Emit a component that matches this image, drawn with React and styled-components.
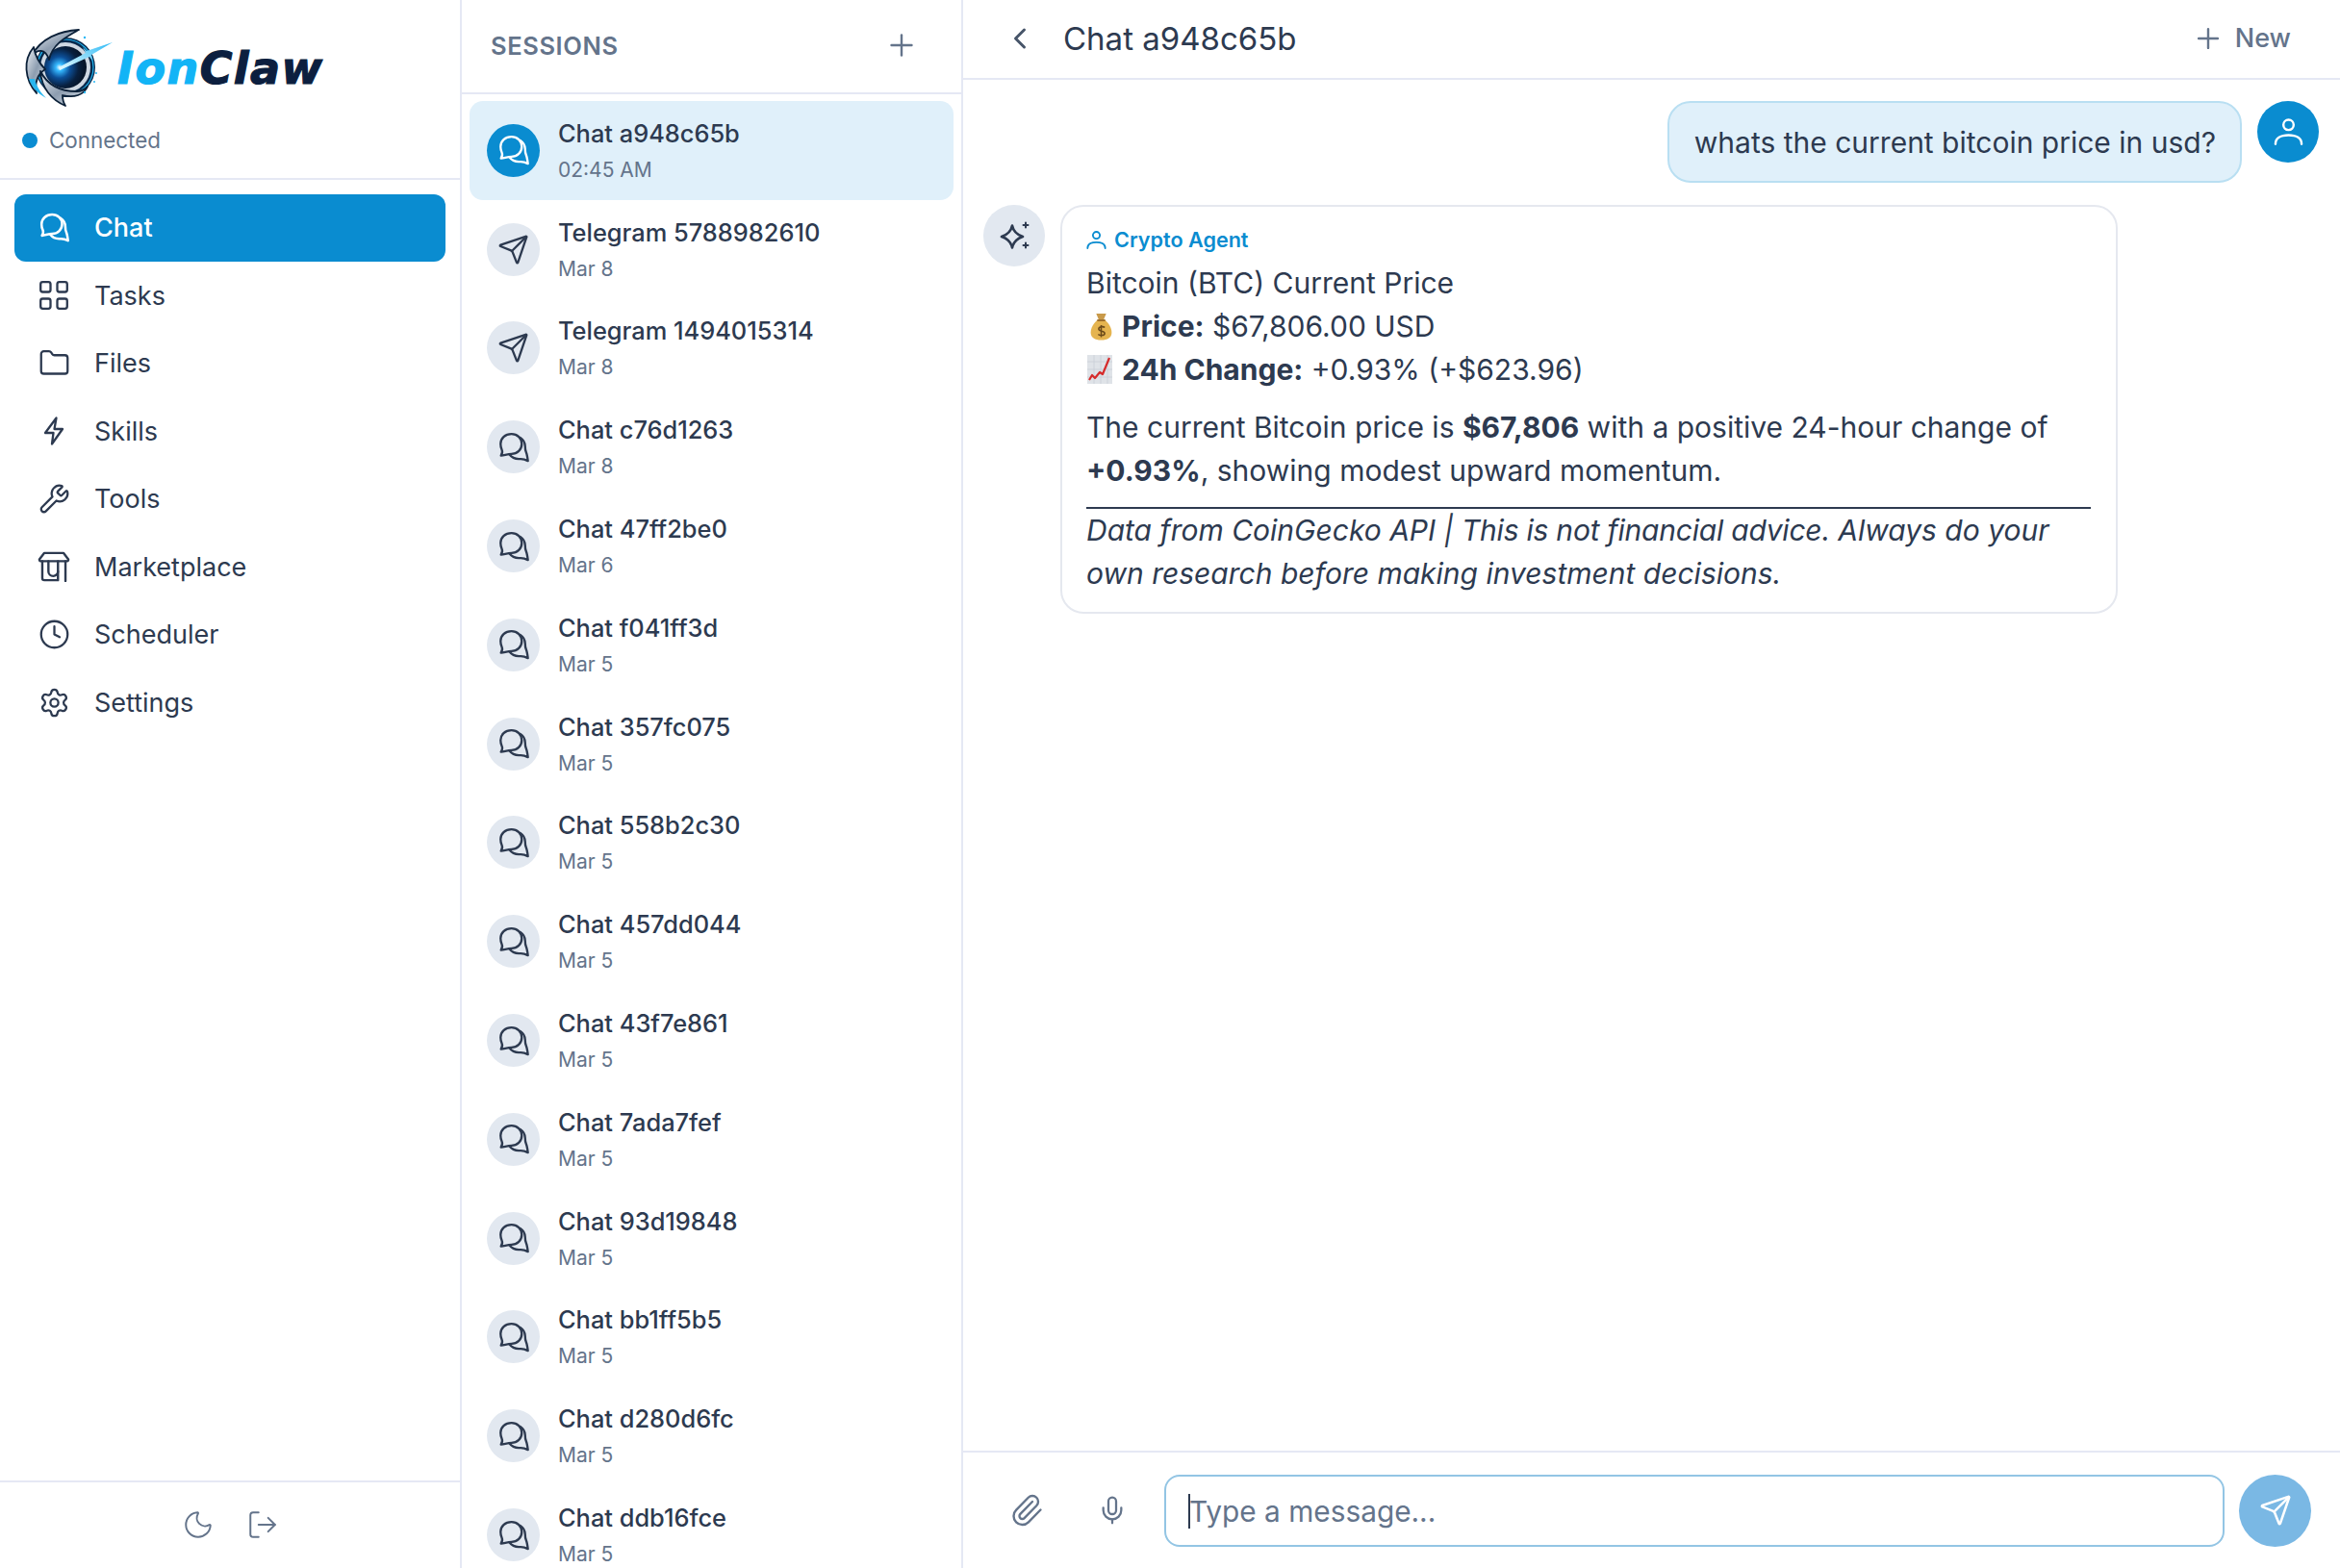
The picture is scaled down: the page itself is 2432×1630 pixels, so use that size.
import React from "react";
import styled, { createGlobalStyle } from "styled-components";
import {
  Folder, Wrench, Clock, Settings, Plus, ChevronLeft, Send,
  Paperclip, Mic, Moon, LogOut,
} from "lucide-react";

const Global = createGlobalStyle`
  html, body { margin: 0; padding: 0; height: 100%; overflow: hidden; background: #fff; }
  body { font-family: Inter, "Noto Sans", "Liberation Sans", sans-serif; color: #2d3a50; }
  #root { height: 100%; }
  * { box-sizing: border-box; }
`;

const Shell = styled.div`
  display: grid;
  grid-template-columns: 480px 521px 1fr;
  height: 1630px;
  background: #fff;
`;

/* ---------- sidebar ---------- */
const Sidebar = styled.aside`
  display: flex;
  flex-direction: column;
  border-right: 2px solid #e5e8f4;
  min-height: 0;
`;
const Brand = styled.div`
  height: 187px;
  flex: none;
  padding: 28px 0 0 25px;
  border-bottom: 2px solid #e5e8f4;
`;
const LogoRow = styled.div`
  display: flex;
  align-items: center;
  height: 84px;
  gap: 4px;
`;
const Wordmark = styled.div`
  font-family: "DejaVu Sans", sans-serif;
  font-weight: 700;
  font-style: italic;
  font-size: 46px;
  line-height: 1;
  letter-spacing: 1.4px;
  color: #0c1f3f;
  margin-top: 2px;
  -webkit-text-stroke: 1.2px currentColor;
`;
const WordAccent = styled.span`
  color: #12b4f6;
`;
const Status = styled.div`
  display: flex;
  align-items: center;
  gap: 12px;
  margin: 20px 0 0 -2px;
  font-size: 22.4px;
  line-height: 28px;
  color: #64748b;
`;
const Dot = styled.span`
  width: 16px;
  height: 16px;
  border-radius: 50%;
  background: #0a8cd2;
`;
const Nav = styled.nav`
  flex: 1;
  display: flex;
  flex-direction: column;
  padding: 14.5px 15px 0;
`;
const NavItem = styled.a`
  display: flex;
  align-items: center;
  gap: 24px;
  height: 70.5px;
  flex: none;
  padding-left: 23px;
  border-radius: 12px;
  font-size: 27px;
  font-weight: ${(p) => (p.$active ? 500 : 400)};
  color: ${(p) => (p.$active ? "#fff" : "#2d3a50")};
  background: ${(p) => (p.$active ? "#0a8cd0" : "transparent")};
`;
const NavGlyph = styled.span`
  width: 36px;
  height: 36px;
  flex: none;
  display: flex;
  align-items: center;
  justify-content: center;
`;
const Foot = styled.div`
  height: 91px;
  flex: none;
  border-top: 2px solid #e5e8f4;
  display: flex;
  align-items: center;
  justify-content: center;
  gap: 33px;
  padding-bottom: 2px;
  color: #64748b;
`;

/* ---------- sessions ---------- */
const Sessions = styled.section`
  display: flex;
  flex-direction: column;
  border-right: 2px solid #e5e8f4;
  min-height: 0;
  overflow: hidden;
`;
const SessionsHead = styled.header`
  height: 98px;
  flex: none;
  display: flex;
  align-items: center;
  justify-content: space-between;
  padding: 0 44px 2px 30px;
  border-bottom: 2px solid #e5e8f4;
`;
const SessionsTitle = styled.h2`
  margin: 0;
  font-size: 25.5px;
  font-weight: 600;
  letter-spacing: 0.6px;
  color: #64748b;
`;
const PlusButton = styled.span`
  display: flex;
  color: #64748b;
`;
const SessionList = styled.div`
  display: flex;
  flex-direction: column;
  padding: 7px 8px 0;
`;
const SessionRow = styled.div`
  display: flex;
  align-items: center;
  gap: 19px;
  height: 102.8px;
  flex: none;
  padding: 0 0 0 18px;
  border-radius: 14px;
  background: ${(p) => (p.$active ? "#e0f0fa" : "transparent")};
`;
const SessionAvatar = styled.div`
  width: 55px;
  height: 55px;
  flex: none;
  border-radius: 50%;
  display: flex;
  align-items: center;
  justify-content: center;
  background: ${(p) => (p.$active ? "#0a8cd0" : "#e2e8f0")};
  color: ${(p) => (p.$active ? "#fff" : "#2d3a50")};
`;
const SessionText = styled.div`
  display: flex;
  flex-direction: column;
  gap: 8px;
`;
const SessionName = styled.div`
  font-size: 25.4px;
  line-height: 32px;
  font-weight: 500;
  color: #2d3a50;
`;
const SessionDate = styled.div`
  font-size: 21px;
  line-height: 27px;
  color: #64748b;
`;

/* ---------- chat ---------- */
const Main = styled.main`
  display: flex;
  flex-direction: column;
  min-width: 0;
  min-height: 0;
`;
const ChatHead = styled.header`
  height: 83px;
  flex: none;
  display: flex;
  align-items: center;
  padding: 0 51px 2px 41px;
  border-bottom: 2px solid #e5e8f4;
`;
const BackIcon = styled.span`
  display: flex;
  color: #475569;
  width: 63px;
`;
const ChatTitle = styled.h1`
  flex: 1;
  margin: 0;
  font-size: 33px;
  font-weight: 400;
  color: #2d3a50;
`;
const NewButton = styled.div`
  display: flex;
  align-items: center;
  gap: 11px;
  font-size: 27px;
  font-weight: 500;
  color: #64748b;
`;
const Messages = styled.div`
  flex: 1;
  min-height: 0;
  display: flex;
  flex-direction: column;
  gap: 23px;
  padding: 22px 22px 0 21px;
`;
const UserRow = styled.div`
  display: flex;
  justify-content: flex-end;
  align-items: flex-start;
  gap: 16px;
`;
const UserBubble = styled.div`
  padding: 20px 25px 20px 26px;
  height: 85px;
  border: 2px solid #b9dff2;
  border-radius: 24px;
  background: #e0f0fa;
  font-size: 30px;
  line-height: 42px;
  color: #2d3a50;
`;
const RoundAvatar = styled.div`
  width: 64px;
  height: 64px;
  flex: none;
  border-radius: 50%;
  display: flex;
  align-items: center;
  justify-content: center;
  background: ${(p) => (p.$user ? "#0a8cd0" : "#e2e8f0")};
  color: ${(p) => (p.$user ? "#fff" : "#2d3a50")};
`;
const AgentRow = styled.div`
  display: flex;
  align-items: flex-start;
  gap: 16px;
`;
const AgentBubble = styled.div`
  width: 1099px;
  height: 425px;
  padding: 18px 26px 0 25px;
  border: 2px solid #e5e8ef;
  border-radius: 24px;
  font-size: 30px;
  line-height: 45px;
  color: #2d3a50;
`;
const AgentName = styled.div`
  display: flex;
  align-items: center;
  gap: 8px;
  height: 33px;
  margin-bottom: 6px;
  font-size: 21.6px;
  font-weight: 600;
  color: #0a8cd0;
`;
const Paragraph = styled.p`
  margin: 0 0 15px;
`;
const Divider = styled.hr`
  margin: 0;
  height: 2px;
  border: 0;
  background: #2d3a50;
`;
const Note = styled.p`
  margin: 0;
  font-style: italic;
`;
const NoteTight = styled.span`
  letter-spacing: -0.22px;
`;
const Emoji = styled.svg`
  display: inline-block;
  vertical-align: -4px;
  margin-left: ${(p) => p.$lead}px;
  margin-right: 10px;
`;
const Composer = styled.footer`
  height: 122px;
  flex: none;
  display: flex;
  align-items: center;
  border-top: 2px solid #e5e8f4;
  padding: 0 30px 0 31px;
  gap: 20px;
`;
const ToolButton = styled.span`
  width: 69px;
  display: flex;
  justify-content: center;
  color: #64748b;
`;
const InputBox = styled.div`
  flex: 1;
  height: 75px;
  display: flex;
  align-items: center;
  padding: 2px 0 0 23px;
  border: 2.5px solid #93c5e4;
  border-radius: 16px;
  font-size: 29.8px;
  color: #64748b;
`;
const Caret = styled.span`
  width: 2px;
  height: 36px;
  margin-right: -1px;
  background: #2d3a50;
`;
const SendButton = styled.span`
  width: 75px;
  height: 75px;
  flex: none;
  margin-left: -5px;
  border-radius: 50%;
  display: flex;
  align-items: center;
  justify-content: center;
  background: #7ab8e4;
  color: #fff;
`;

/* ---------- drawings ---------- */
const ChatsIcon = ({ size = 31, width = 1.95 }) => (
  <svg width={size} height={size} viewBox="0 0 24 24" fill="none" stroke="currentColor" strokeWidth={width} strokeLinecap="round" strokeLinejoin="round">
    <path d="M10.200 1.600c4.600 0 8 3.400 8 7.700 0 4.400-3.500 7.800-8 7.800-2.600 0-5 .9-8.200 1.400 1-1.600 1.400-3 .7-4.500-.7-1.400-1-2.800-1-4.600 0-4.400 3.500-7.800 8.500-7.800z" />
    <path d="M17 4.400c2.500 1.700 3.800 4 3.800 6.700 0 2 .2 3.500 .9 5 .4 1 .8 2.500 1.300 6.500-2.800-1.500-4.400-1.700-6.500-1.500-3.500.2-6-1-8-3.600" />
  </svg>
);

const GridIcon = () => (
  <svg width="30" height="30" viewBox="0 0 30 30" fill="none" stroke="currentColor" strokeWidth="2.300">
    <rect x="1.200" y="1.200" width="10.300" height="10.300" rx="2.200" />
    <rect x="18.500" y="1.200" width="10.300" height="10.300" rx="2.200" />
    <rect x="1.200" y="18.500" width="10.300" height="10.300" rx="2.200" />
    <rect x="18.500" y="18.500" width="10.300" height="10.300" rx="2.200" />
  </svg>
);

const BoltIcon = () => (
  <svg width="30" height="30" viewBox="0 0 30 30" fill="none" stroke="currentColor" strokeWidth="2.300" strokeLinejoin="round" strokeLinecap="round">
    <path d="M17.500 1.500L6 17h8.500l-1.500 11.500L24 13h-8.500z" />
  </svg>
);

const StoreIcon = () => (
  <svg width="34" height="34" viewBox="0 0 24 24" fill="none" stroke="currentColor" strokeWidth="1.700" strokeLinecap="round" strokeLinejoin="round">
    <path d="M5 2h14l3.500 4.500c.4.700 0 1.500-1 1.500H2.500c-1 0-1.400-.8-1-1.500z" />
    <path d="M3.500 8v12.500a1.500 1.500 0 0 0 1.500 1.500h10V8" />
    <path d="M20.500 8v14.500" />
    <path d="M8 8v7.500a3.500 3.500 0 0 0 7 0" />
  </svg>
);

const PersonIcon = ({ width = 31, stroke = 2.500 }) => (
  <svg width={width} viewBox="0 0 32 29" fill="none" stroke="currentColor" strokeWidth={stroke} strokeLinecap="round">
    <circle cx="16" cy="7" r="5.500" />
    <path d="M2 27.500c0-6 5.500-9.500 14-9.500s14 3.500 14 9.500" />
  </svg>
);

const SparkIcon = () => (
  <svg width="36" height="36" viewBox="0 0 36 36" fill="none" stroke="currentColor" strokeWidth="2.600" strokeLinejoin="round" strokeLinecap="round">
    <path d="M16 7.500c1 5 3.500 9 11 11.500-7.500 2.500-10 6.500-11 11.500-1-5-3.500-9-11-11.500 7.500-2.500 10-6.500 11-11.500z" />
    <path d="M30 4.500v5M27.500 7h5M30 25.500v5M27.500 28h5" strokeWidth="2" />
  </svg>
);

const MoneyBag = () => (
  <Emoji $lead={4} width="23" height="29" viewBox="0 0 22 28">
    <path d="M6 1h10l-2.500 6h-5z" fill="#c99a4a" />
    <path d="M7.500 7h7c4 3.500 7 8 7 13 0 5-4 7.500-10.500 7.500S.5 25 .5 20c0-5 3-9.500 7-13z" fill="#e5b44f" />
    <path d="M7 7h8v1.500H7z" fill="#8a5a1e" />
    <path d="M14.500 15c-1-1.300-6-1.300-6 1.300 0 3 6 1.500 6 4.400 0 2.600-5 2.600-6.500 1M11 12.500v12" fill="none" stroke="#6b4a1a" strokeWidth="1.500" />
  </Emoji>
);

const ChartEmoji = () => (
  <Emoji $lead={1} width="26" height="30" viewBox="0 0 26 30">
    <rect x="0" y="0" width="26" height="30" fill="#dfe3e8" />
    <path d="M0 7h26M0 15h26M0 23h26M7 0v30M14 0v30M21 0v30" stroke="#c9cfd7" strokeWidth="0.800" />
    <path d="M2 26l3-5 3 3 5-6 3 2 7-17" fill="none" stroke="#d62b2b" strokeWidth="2.200" strokeLinejoin="round" />
  </Emoji>
);

const Emblem = () => (
  <svg width="93" height="84" viewBox="25 28 93 84">
    <defs>
      <radialGradient id="core" cx="0.36" cy="0.5" r="0.6">
        <stop offset="0" stopColor="#e8fbff" />
        <stop offset="0.14" stopColor="#35b9ff" />
        <stop offset="0.42" stopColor="#0c4f98" />
        <stop offset="0.75" stopColor="#08203f" />
        <stop offset="1" stopColor="#061529" />
      </radialGradient>
      <linearGradient id="steel" x1="0" y1="0" x2="1" y2="1">
        <stop offset="0" stopColor="#eef2f6" />
        <stop offset="0.5" stopColor="#8d9db0" />
        <stop offset="1" stopColor="#dbe2ea" />
      </linearGradient>
      <linearGradient id="beam" x1="0" y1="1" x2="1" y2="0">
        <stop offset="0" stopColor="#e8fbff" />
        <stop offset="1" stopColor="#29b8f5" />
      </linearGradient>
    </defs>
    <circle cx="68" cy="70" r="31" fill="#0a2a4d" />
    <circle cx="68" cy="70" r="29" fill="none" stroke="#1fb3f0" strokeWidth="1.200" />
    <circle cx="68" cy="70" r="26" fill="#cfd8e2" />
    <circle cx="68" cy="70" r="22" fill="url(#core)" />
    <path d="M82 31C62 32 42 40 33 58c6-7 14-8 18 4 3-15 16-23 31-31z" fill="url(#steel)" stroke="#0b2038" strokeWidth="1.800" strokeLinejoin="round" />
    <path d="M35 49C24 62 25 82 38 97c-2-11 1-20 9-25-6-6-10-12-12-23z" fill="url(#steel)" stroke="#0b2038" strokeWidth="1.800" strokeLinejoin="round" />
    <path d="M68 110C54 104 43 92 42 74c6 12 18 21 38 21 5 0 8-2 11-5-4 9-14 12-26 9 0 4 1 8 3 11z" fill="url(#steel)" stroke="#0b2038" strokeWidth="1.800" strokeLinejoin="round" />
    <path d="M30 82c3 9 9 15 18 20-6-6-10-12-12-20z" fill="#28b6ef" />
    <path d="M117 44L90 53l-4-4 3 6-28 15 1 3 31-14 3 4-1-6z" fill="url(#beam)" />
    <circle cx="100" cy="76" r="1" fill="#29b8f5" />
    <circle cx="98" cy="85" r="1" fill="#29b8f5" />
    <circle cx="88" cy="96" r="1.200" fill="#29b8f5" />
    <circle cx="88" cy="39" r="1.200" fill="#29b8f5" />
  </svg>
);

/* ---------- data ---------- */
const navItems = [
  ["Chat", <ChatsIcon key="c" />],
  ["Tasks", <GridIcon key="t" />],
  ["Files", <Folder key="f" size={33} strokeWidth={1.65} />],
  ["Skills", <BoltIcon key="s" />],
  ["Tools", <Wrench key="w" size={33} strokeWidth={1.65} />],
  ["Marketplace", <StoreIcon key="m" />],
  ["Scheduler", <Clock key="k" size={33} strokeWidth={1.65} />],
  ["Settings", <Settings key="g" size={33} strokeWidth={1.65} />],
];

const sessions = [
  ["Chat a948c65b", "02:45 AM", "chat"],
  ["Telegram 5788982610", "Mar 8", "tg"],
  ["Telegram 1494015314", "Mar 8", "tg"],
  ["Chat c76d1263", "Mar 8", "chat"],
  ["Chat 47ff2be0", "Mar 6", "chat"],
  ["Chat f041ff3d", "Mar 5", "chat"],
  ["Chat 357fc075", "Mar 5", "chat"],
  ["Chat 558b2c30", "Mar 5", "chat"],
  ["Chat 457dd044", "Mar 5", "chat"],
  ["Chat 43f7e861", "Mar 5", "chat"],
  ["Chat 7ada7fef", "Mar 5", "chat"],
  ["Chat 93d19848", "Mar 5", "chat"],
  ["Chat bb1ff5b5", "Mar 5", "chat"],
  ["Chat d280d6fc", "Mar 5", "chat"],
  ["Chat ddb16fce", "Mar 5", "chat"],
];

export default function App() {
  return (
    <>
      <Global />
      <Shell>
        <Sidebar>
          <Brand>
            <LogoRow>
              <Emblem />
              <Wordmark><WordAccent>Ion</WordAccent>Claw</Wordmark>
            </LogoRow>
            <Status><Dot />Connected</Status>
          </Brand>
          <Nav>
            {navItems.map(([label, icon], i) => (
              <NavItem key={label} $active={i === 0}><NavGlyph>{icon}</NavGlyph>{label}</NavItem>
            ))}
          </Nav>
          <Foot>
            <Moon size={34} strokeWidth={1.4} />
            <LogOut size={34} strokeWidth={1.4} />
          </Foot>
        </Sidebar>

        <Sessions>
          <SessionsHead>
            <SessionsTitle>SESSIONS</SessionsTitle>
            <PlusButton><Plus size={36} strokeWidth={1.6} /></PlusButton>
          </SessionsHead>
          <SessionList>
            {sessions.map(([name, date, kind], i) => (
              <SessionRow key={name} $active={i === 0}>
                <SessionAvatar $active={i === 0}>
                  {kind === "tg" ? <Send size={33} strokeWidth={1.7} /> : <ChatsIcon size={32} width={1.75} />}
                </SessionAvatar>
                <SessionText>
                  <SessionName>{name}</SessionName>
                  <SessionDate>{date}</SessionDate>
                </SessionText>
              </SessionRow>
            ))}
          </SessionList>
        </Sessions>

        <Main>
          <ChatHead>
            <BackIcon><ChevronLeft size={36} strokeWidth={2} /></BackIcon>
            <ChatTitle>Chat a948c65b</ChatTitle>
            <NewButton><Plus size={34} strokeWidth={1.7} />New</NewButton>
          </ChatHead>
          <Messages>
            <UserRow>
              <UserBubble>whats the current bitcoin price in usd?</UserBubble>
              <RoundAvatar $user><PersonIcon /></RoundAvatar>
            </UserRow>
            <AgentRow>
              <RoundAvatar><SparkIcon /></RoundAvatar>
              <AgentBubble>
                <AgentName><PersonIcon width={21} stroke={2.800} />Crypto Agent</AgentName>
                <Paragraph>
                  Bitcoin (BTC) Current Price<br />
                  <MoneyBag /><b>Price:</b> $67,806.00 USD<br />
                  <ChartEmoji /><b>24h Change:</b> +0.93% (+$623.96)
                </Paragraph>
                <Paragraph>
                  The current Bitcoin price is <b>$67,806</b> with a positive 24-hour change of <b>+0.93%</b>, showing modest upward momentum.
                </Paragraph>
                <Divider />
                <Note>Data from CoinGecko API | <NoteTight>This is not financial advice.</NoteTight> Always do your own research before making investment decisions.</Note>
              </AgentBubble>
            </AgentRow>
          </Messages>
          <Composer>
            <ToolButton><Paperclip size={36} strokeWidth={1.6} /></ToolButton>
            <ToolButton><Mic size={32} strokeWidth={1.7} /></ToolButton>
            <InputBox><Caret />Type a message...</InputBox>
            <SendButton><Send size={34} strokeWidth={1.8} /></SendButton>
          </Composer>
        </Main>
      </Shell>
    </>
  );
}
